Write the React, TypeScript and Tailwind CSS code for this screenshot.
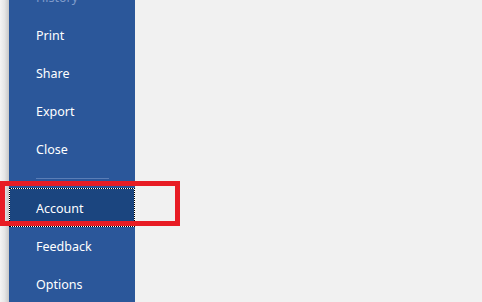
const ITEMS_TOP = ["History", "Print", "Share", "Export", "Close"];
const ITEMS_BOTTOM = ["Feedback", "Options"];

function NavItem({ label, faded }: { label: string; faded?: boolean }) {
  return (
    <div
      className={
        "h-[38px] flex items-center pl-[27px] pt-[3px] text-[12.5px] " +
        (faded ? "text-[#7f9bcb]" : "text-white")
      }
    >
      {label}
    </div>
  );
}

export default function App() {
  return (
    <div
      className="relative flex h-[302px] w-[482px] overflow-hidden bg-[#f1f1f1]"
      style={{ fontFamily: '"Noto Sans", "Open Sans", sans-serif' }}
    >
      {/* window edge shadow */}
      <div className="w-[9px] shrink-0 bg-gradient-to-r from-[#f4f4f4] via-[#e6e6e6] to-[#c8c8c8]" />

      {/* backstage nav */}
      <nav className="w-[126px] shrink-0 bg-[#2b579a]">
        <div className="mt-[-22px]">
          {ITEMS_TOP.map((label) => (
            <NavItem key={label} label={label} faded={label === "History"} />
          ))}
          <div className="h-[20px] flex items-center pl-[27px]">
            <div className="h-px w-[73px] bg-[#5a7db6]" />
          </div>
          <div className="bg-white">
            <div className="h-[39px] flex items-center pl-[26px] pt-[3px] text-[12.5px] text-white border border-dotted border-black bg-[#1b457f] bg-clip-padding">
              Account
            </div>
          </div>
          {ITEMS_BOTTOM.map((label) => (
            <NavItem key={label} label={label} />
          ))}
        </div>
      </nav>

      <main className="flex-1" />

      {/* annotation */}
      <div className="absolute left-0 top-[181px] h-[45px] w-[180px] border-[5px] border-[#e81c24]" />
    </div>
  );
}
